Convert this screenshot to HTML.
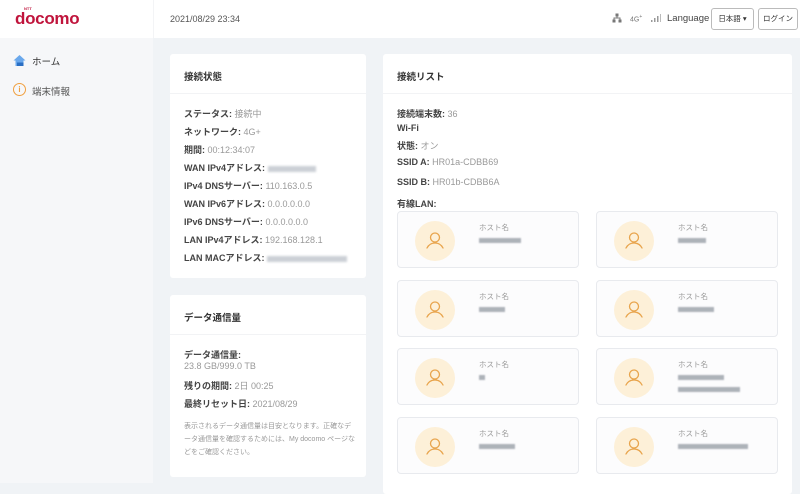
<!DOCTYPE html>
<html><head><meta charset="utf-8"><style>
*{margin:0;padding:0;box-sizing:border-box}
body{width:800px;height:483px;overflow:hidden;background:#f0f3f6;font-family:"Liberation Sans","Noto Sans CJK JP",sans-serif;position:relative;color:#333}
.a{position:absolute}
.hdr{left:0;top:0;width:800px;height:38px;background:#fff}
.side{left:0;top:38px;width:153px;height:445px;background:#f6f7f9}
.card{background:#fff;border-radius:3px}
.ct{font-size:9.5px;font-weight:bold;color:#333}
.row{font-size:9px;font-weight:bold;color:#444;white-space:nowrap}
.row span{font-weight:normal;color:#999}
.blur{display:inline-block;height:6px;background:#ccd0d6;filter:blur(1px);vertical-align:middle}
.dev{width:182px;height:57px;border:1px solid #e8eaee;border-radius:4px;background:#fcfcfd}
.av{position:absolute;left:17px;top:9px;width:40px;height:40px;border-radius:50%;background:#fdf0d8}
.hn{position:absolute;left:81px;top:10px;font-size:7.5px;color:#999}
.hb{position:absolute;left:81px;top:26px;height:5px;background:#9aa0a8;filter:blur(.8px);opacity:.8}
.btn{border:1px solid #bbb;border-radius:3px;height:22px;font-size:7.5px;line-height:20px;text-align:center;background:#fff;color:#333}
</style></head><body>
<div class="a hdr"></div>
<div class="a" style="left:153px;top:0;width:1px;height:38px;background:#f3f4f6"></div>
<div class="a" style="left:15px;top:9px;font-size:17px;font-weight:bold;color:#c0143c;letter-spacing:-.3px">docomo</div>
<div class="a" style="left:24px;top:6px;font-size:4px;font-weight:bold;color:#c0143c">NTT</div>
<div class="a" style="left:170px;top:14px;font-size:9px;color:#555">2021/08/29 23:34</div>
<svg class="a" style="left:612px;top:13px" width="10" height="10" viewBox="0 0 10 10"><rect x="3.5" y="0.5" width="3" height="3" fill="#777"/><rect x="0.5" y="6.5" width="3" height="3" fill="#777"/><rect x="6.5" y="6.5" width="3" height="3" fill="#777"/><path d="M5 3.5V5M2 6.5V5h6v1.5" stroke="#777" fill="none"/></svg>
<div class="a" style="left:630px;top:14px;font-size:7px;color:#777">4G<sup style="font-size:5px">+</sup></div>
<svg class="a" style="left:651px;top:14px" width="10" height="8"><rect x="0" y="6" width="1.5" height="2" fill="#999"/><rect x="3" y="4" width="1.5" height="4" fill="#999"/><rect x="6" y="2" width="1.5" height="6" fill="#999"/><rect x="9" y="0" width="1.5" height="8" fill="#bbb"/></svg>
<div class="a" style="left:667px;top:13px;font-size:9.5px;color:#444">Language</div>
<div class="a btn" style="left:711px;top:8px;width:43px">日本語 ▾</div>
<div class="a btn" style="left:758px;top:8px;width:40px">ログイン</div>
<div class="a side"></div>
<svg class="a" style="left:13px;top:54px" width="13" height="13" viewBox="0 0 13 13"><path d="M6.5 1L0.5 6.5H2.5V12H10.5V6.5H12.5Z" fill="#6aa8ec"/><path d="M4 12V8.5H10.5V12Z" fill="#2a6fc4"/></svg>
<div class="a" style="left:32px;top:54px;font-size:9.5px;color:#333">ホーム</div>
<div class="a" style="left:13px;top:83px;width:13px;height:13px;border:1.3px solid #f0a040;border-radius:50%;font-size:8px;color:#f0a040;text-align:center;line-height:11px;font-weight:bold">i</div>
<div class="a" style="left:32px;top:84px;font-size:9.5px;color:#555">端末情報</div>

<div class="a card" style="left:170px;top:54px;width:196px;height:224px"></div>
<div class="a" style="left:170px;top:93px;width:196px;height:1px;background:#f2f3f5"></div>
<div class="a ct" style="left:184px;top:69px">接続状態</div>
<div class="a row" style="left:184px;top:107px">ステータス: <span>接続中</span></div>
<div class="a row" style="left:184px;top:125px">ネットワーク: <span>4G+</span></div>
<div class="a row" style="left:184px;top:143px">期間: <span>00:12:34:07</span></div>
<div class="a row" style="left:184px;top:161px">WAN IPv4アドレス: <i class="blur" style="width:48px"></i></div>
<div class="a row" style="left:184px;top:179px">IPv4 DNSサーバー: <span>110.163.0.5</span></div>
<div class="a row" style="left:184px;top:197px">WAN IPv6アドレス: <span>0.0.0.0.0.0</span></div>
<div class="a row" style="left:184px;top:215px">IPv6 DNSサーバー: <span>0.0.0.0.0.0</span></div>
<div class="a row" style="left:184px;top:233px">LAN IPv4アドレス: <span>192.168.128.1</span></div>
<div class="a row" style="left:184px;top:251px">LAN MACアドレス: <i class="blur" style="width:80px"></i></div>

<div class="a card" style="left:170px;top:295px;width:196px;height:182px"></div>
<div class="a" style="left:170px;top:334px;width:196px;height:1px;background:#f2f3f5"></div>
<div class="a ct" style="left:184px;top:310px">データ通信量</div>
<div class="a row" style="left:184px;top:348px">データ通信量:</div>
<div class="a row" style="left:184px;top:361px"><span>23.8 GB/999.0 TB</span></div>
<div class="a row" style="left:184px;top:379px">残りの期間: <span>2日 00:25</span></div>
<div class="a row" style="left:184px;top:397px">最終リセット日: <span>2021/08/29</span></div>
<div class="a" style="left:184px;top:420px;width:172px;font-size:7px;line-height:13px;color:#999">表示されるデータ通信量は目安となります。正確なデータ通信量を確認するためには、My docomo ページなどをご確認ください。</div>

<div class="a card" style="left:383px;top:54px;width:409px;height:440px"></div>
<div class="a" style="left:383px;top:93px;width:409px;height:1px;background:#f2f3f5"></div>
<div class="a ct" style="left:397px;top:69px">接続リスト</div>
<div class="a row" style="left:397px;top:107px">接続端末数: <span>36</span></div>
<div class="a row" style="left:397px;top:123px">Wi-Fi</div>
<div class="a row" style="left:397px;top:139px">状態: <span>オン</span></div>
<div class="a row" style="left:397px;top:157px">SSID A: <span>HR01a-CDBB69</span></div>
<div class="a row" style="left:397px;top:177px">SSID B: <span>HR01b-CDBB6A</span></div>
<div class="a row" style="left:397px;top:197px">有線LAN:</div>

<div class="a dev" style="left:397px;top:211px"><div class="av"></div><div class="hn">ホスト名</div><div class="hb" style="width:42px"></div></div>
<div class="a dev" style="left:596px;top:211px"><div class="av"></div><div class="hn">ホスト名</div><div class="hb" style="width:28px"></div></div>
<div class="a dev" style="left:397px;top:280px"><div class="av"></div><div class="hn">ホスト名</div><div class="hb" style="width:26px"></div></div>
<div class="a dev" style="left:596px;top:280px"><div class="av"></div><div class="hn">ホスト名</div><div class="hb" style="width:36px"></div></div>
<div class="a dev" style="left:397px;top:348px"><div class="av"></div><div class="hn">ホスト名</div><div class="hb" style="width:6px"></div></div>
<div class="a dev" style="left:596px;top:348px"><div class="av"></div><div class="hn">ホスト名</div><div class="hb" style="width:46px"></div><div class="hb" style="width:62px;top:38px"></div></div>
<div class="a dev" style="left:397px;top:417px"><div class="av"></div><div class="hn">ホスト名</div><div class="hb" style="width:36px"></div></div>
<div class="a dev" style="left:596px;top:417px"><div class="av"></div><div class="hn">ホスト名</div><div class="hb" style="width:70px"></div></div>

<script>
document.querySelectorAll('.av').forEach(function(a){a.innerHTML='<svg width="40" height="40" viewBox="0 0 40 40"><circle cx="20" cy="16.5" r="4.5" fill="none" stroke="#e8a44c" stroke-width="1.3"/><path d="M12 27c2-4 5-5 8-5s6 1 8 5" fill="none" stroke="#e8a44c" stroke-width="1.3" stroke-linecap="round"/></svg>';});
</script>
</body></html>
